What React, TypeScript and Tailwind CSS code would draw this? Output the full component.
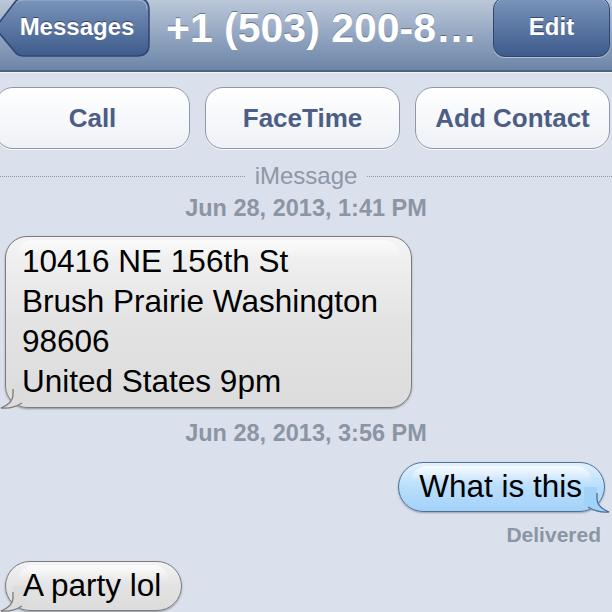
import React from "react";

const font = { fontFamily: '"Liberation Sans", Arial, Helvetica, sans-serif' };

function NavButton({ label, back }: { label: string; back?: boolean }) {
  return (
    <div className={`relative h-[60px] -mt-[3px] flex items-center justify-center ${back ? "w-[156px] -ml-[6px] pl-[10px]" : "w-[117px] rounded-[12px] border border-[#2f4670] bg-linear-to-b from-[#7b95bb] to-[#3d5b8c] shadow-[inset_0_1px_0_rgba(255,255,255,0.35),0_1px_0_rgba(255,255,255,0.45)]"}`}>
      {back && (
        <svg className="absolute inset-0" width="156" height="60" viewBox="0 0 156 60">
          <defs>
            <linearGradient id="bk" x1="0" y1="0" x2="0" y2="1">
              <stop offset="0" stopColor="#7b95bb" />
              <stop offset="1" stopColor="#3d5b8c" />
            </linearGradient>
          </defs>
          <path d="M1 31 L21 5 Q24 1 30 1 L143 1 Q155 1 155 13 L155 47 Q155 59 143 59 L30 59 Q24 59 21 55 Z" fill="url(#bk)" stroke="#2f4670" strokeWidth="1.5" />
          <path d="M22 6 Q25 3 30 3 L143 3 Q153 3 153 13" fill="none" stroke="rgba(255,255,255,0.3)" strokeWidth="1" />
        </svg>
      )}
      <span className="relative text-white font-bold text-[24px] [text-shadow:0_-1px_0_rgba(20,35,60,0.6)]" style={font}>
        {label}
      </span>
    </div>
  );
}

function ActionButton({ label }: { label: string }) {
  return (
    <div className="w-[195px] h-[62px] flex items-center justify-center rounded-[18px] border border-[#8e98a8] bg-linear-to-b from-[#ffffff] to-[#eef1f6] shadow-[0_1px_0_rgba(255,255,255,0.8)]">
      <span className="text-[26px] font-bold text-[#4c5e85]" style={font}>{label}</span>
    </div>
  );
}

function TailLeft({ fill }: { fill: string }) {
  return (
    <svg className="absolute -left-[6px] -bottom-[2px]" width="26" height="26" viewBox="0 0 26 26">
      <path d="M13 0 L13 12 Q13 20 1 25 Q13 26 22 20 L26 18 L26 0 Z" fill={fill} />
      <path d="M13 6 L13 12 Q13 20 1 25 Q13 26 22 20" fill="none" stroke="#7c7c7c" strokeWidth="1.3" />
    </svg>
  );
}

function TailRight({ fill }: { fill: string }) {
  return (
    <svg className="absolute -right-[6px] -bottom-[2px]" width="26" height="26" viewBox="0 0 26 26">
      <path d="M13 0 L13 12 Q13 20 25 25 Q13 26 4 20 L0 18 L0 0 Z" fill={fill} />
      <path d="M13 6 L13 12 Q13 20 25 25 Q13 26 4 20" fill="none" stroke="#4f6f95" strokeWidth="1.3" />
    </svg>
  );
}

function DateLabel({ text }: { text: string }) {
  return (
    <div className="text-center text-[23.5px] font-bold text-[#8c95a4] leading-none" style={font}>
      {text}
    </div>
  );
}

export default function App() {
  return (
    <div className="w-[612px] h-[612px] overflow-hidden bg-[#dae1ec] flex flex-col" style={font}>
      <header className="h-[72px] shrink-0 flex items-start justify-between pr-[2px] bg-linear-to-b from-[#bcc8da] via-[#93a6c1] to-[#6d85a7] border-b-2 border-[#4d607c] shadow-[0_1px_0_rgba(255,255,255,0.6)]">
        <NavButton label="Messages" back />
        <div className="pt-[6px] text-white font-bold text-[41px] leading-[44px] whitespace-nowrap [text-shadow:0_-1px_0_rgba(40,60,90,0.55)]">
          +1 (503) 200-8…
        </div>
        <NavButton label="Edit" />
      </header>

      <div className="mt-[15px] -ml-[5px] flex gap-[15px]">
        <ActionButton label="Call" />
        <ActionButton label="FaceTime" />
        <ActionButton label="Add Contact" />
      </div>

      <div className="mt-[15px] flex items-center gap-[10px]">
        <div className="flex-1 border-t border-dotted border-[#8f98a8]" />
        <span className="text-[24px] leading-none text-[#8f97a6]">iMessage</span>
        <div className="flex-1 border-t border-dotted border-[#8f98a8]" />
      </div>

      <div className="mt-[9px]">
        <DateLabel text="Jun 28, 2013, 1:41 PM" />
      </div>

      <div className="mt-[15px] pl-[5px]">
        <div className="relative w-[407px] h-[172px] rounded-[22px] border-[1.5px] border-[#7c7c7c] bg-linear-to-b from-[#f4f4f4] via-[#e3e3e3] to-[#dcdcdc] shadow-[0_1px_2px_rgba(0,0,0,0.35)] px-[16px] pt-[4px]">
          <TailLeft fill="#dcdcdc" />
          <div className="absolute left-[10px] right-[10px] top-[3px] h-[18px] rounded-t-[18px] bg-linear-to-b from-white/70 to-white/0" />
          <div className="relative text-[31.5px] leading-[40px] text-black">
            <div>10416 NE 156th St</div>
            <div>Brush Prairie Washington</div>
            <div>98606</div>
            <div>United States 9pm</div>
          </div>
        </div>
      </div>

      <div className="mt-[14px]">
        <DateLabel text="Jun 28, 2013, 3:56 PM" />
      </div>

      <div className="mt-[17px] flex justify-end pr-[7px]">
        <div className="relative h-[50px] rounded-[25px] border-[1.5px] border-[#4f6f95] bg-linear-to-b from-[#e2f1ff] via-[#b9defb] to-[#a3d2f8] shadow-[0_1px_2px_rgba(0,0,0,0.3)] pl-[20px] pr-[22px] flex items-center">
          <TailRight fill="#a3d2f8" />
          <div className="absolute left-[12px] right-[12px] top-[3px] h-[16px] rounded-t-[20px] bg-linear-to-b from-white/70 to-white/0" />
          <span className="relative text-[31.5px] leading-none text-black">What is this</span>
        </div>
      </div>

      <div className="mt-[12px] pr-[11px] text-right text-[21px] leading-none font-bold text-[#8c95a4]">
        Delivered
      </div>

      <div className="mt-[16px] pl-[5px] flex">
        <div className="relative h-[50px] rounded-[25px] border-[1.5px] border-[#7c7c7c] bg-linear-to-b from-[#f4f4f4] via-[#e3e3e3] to-[#dcdcdc] shadow-[0_1px_2px_rgba(0,0,0,0.35)] pl-[17px] pr-[20px] flex items-center">
          <TailLeft fill="#dcdcdc" />
          <div className="absolute left-[12px] right-[12px] top-[3px] h-[16px] rounded-t-[20px] bg-linear-to-b from-white/70 to-white/0" />
          <span className="relative text-[31.5px] leading-none text-black">A party lol</span>
        </div>
      </div>
    </div>
  );
}
